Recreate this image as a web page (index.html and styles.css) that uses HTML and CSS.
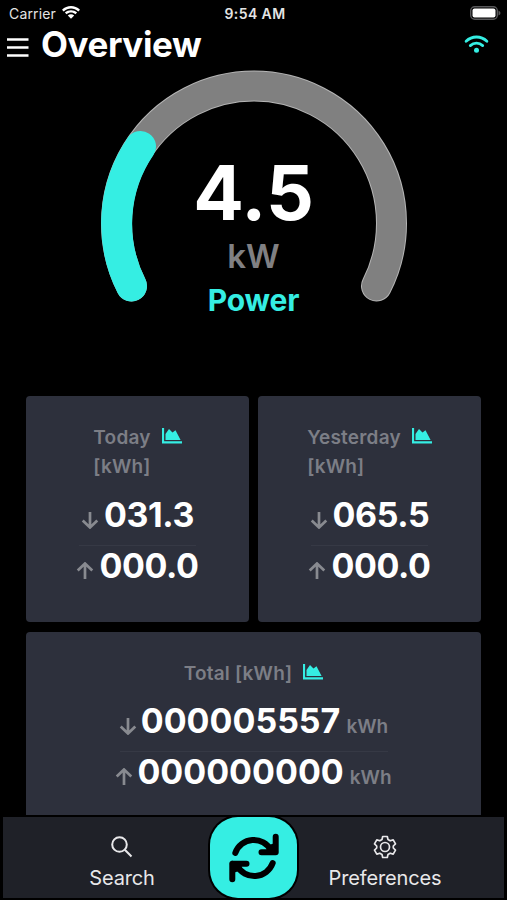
FILE: index.html
```
<!DOCTYPE html>
<html lang="en">
    <head>
        <meta charset="utf-8">
        <title>Overview</title>
        <link rel="stylesheet" href="styles.css">
    </head>
    <body>
        <!-- shared icons -->
        <svg class="sprite">
            <symbol id="wifi" viewBox="0 0 24 18">
                <path d="M1.6 6.2C7.5 0.6 16.500.6 22.4 6.2" />
                <path d="M5.8 10.6C9.400 7.300 14.600 7.300 18.200 10.600" />
                <circle cx="12" cy="15.300" r="2.500" />
            </symbol>
            <symbol id="chart" viewBox="0 0 20 16">
                <path d="M1 0V14.300H20" fill="none" stroke="currentColor" stroke-width="2.200" />
                <path d="M3.500 12V6L7 1L10.500 4.500L13.500 2.300L18.600 12Z" fill="currentColor" />
            </symbol>
            <symbol id="down" viewBox="0 0 18 18">
                <path d="M9 1V16.500M1.700 9.500L9 16.500L16.300 9.500" />
            </symbol>
            <symbol id="up" viewBox="0 0 18 18">
                <path d="M9 17V1.500M1.700 8.500L9 1.500L16.300 8.500" />
            </symbol>
        </svg>

        <div class="status-bar">
            <div class="carrier">
                <span>Carrier</span>
                <svg class="status-wifi" viewBox="0 0 18 13">
                    <path d="M0 3.700C5-1.200 13-1.200 18 3.700L16.300 5.400C12.200 1.500 5.800 1.500 1.700 5.400ZM2.900 6.600C6.300 3.400 11.700 3.400 15.100 6.600L13.400 8.300C10.900 6 7.100 6 4.600 8.300ZM5.800 9.500C7.600 7.900 10.400 7.900 12.200 9.500L9 12.700Z" />
                </svg>
            </div>
            <span class="time">9:54 AM</span>
            <svg class="battery" viewBox="0 0 31 14">
                <rect x="0.700" y="0.700" width="26.600" height="12.600" rx="4" fill="none" stroke="#58585a" stroke-width="1.400" />
                <rect x="2.500" y="2.500" width="23" height="9" rx="2" fill="#fff" />
                <path d="M28.500 4.500Q30.500 5.500 30.500 7T28.500 9.500Z" fill="#58585a" />
            </svg>
        </div>

        <header class="header">
            <svg class="menu" viewBox="0 0 22 19">
                <path d="M0 1.500H21.500M0 9.500H21.500M0 17.500H21.500" />
            </svg>
            <h1>Overview</h1>
            <svg class="wifi"><use href="#wifi" /></svg>
        </header>

        <section class="gauge">
            <svg class="gauge-arc" viewBox="0 0 308 234">
                <path class="edge" d="M31.500 216A137.500 137.500 0 1 1 276.500 216" />
                <path class="track" d="M31.500 216A137.500 137.500 0 1 1 276.500 216" />
                <path class="level" d="M31.500 216A137.500 137.500 0 0 1 40.500 76.500" />
            </svg>
            <div class="gauge-text">
                <div class="gauge-value">4.5</div>
                <div class="gauge-unit">kW</div>
                <div class="gauge-label">Power</div>
            </div>
        </section>

        <main class="cards">
            <div class="card">
                <div class="card-title">
                    <span>Today<br>[kWh]</span>
                    <svg class="chart"><use href="#chart" /></svg>
                </div>
                <div class="row"><svg class="arrow"><use href="#down" /></svg><b>031.3</b></div>
                <div class="line"></div>
                <div class="row"><svg class="arrow"><use href="#up" /></svg><b>000.0</b></div>
            </div>
            <div class="card">
                <div class="card-title">
                    <span>Yesterday<br>[kWh]</span>
                    <svg class="chart"><use href="#chart" /></svg>
                </div>
                <div class="row"><svg class="arrow"><use href="#down" /></svg><b>065.5</b></div>
                <div class="line"></div>
                <div class="row"><svg class="arrow"><use href="#up" /></svg><b>000.0</b></div>
            </div>
            <div class="card total">
                <div class="card-title">
                    <span>Total [kWh]</span>
                    <svg class="chart"><use href="#chart" /></svg>
                </div>
                <div class="row"><svg class="arrow"><use href="#down" /></svg><b>000005557</b><span class="unit">kWh</span></div>
                <div class="line"></div>
                <div class="row"><svg class="arrow"><use href="#up" /></svg><b>000000000</b><span class="unit">kWh</span></div>
            </div>
        </main>

        <nav class="tabs">
            <div class="tab">
                <svg class="tab-icon" viewBox="0 0 24 24">
                    <circle cx="9.500" cy="9.500" r="7.300" />
                    <path d="M14.800 14.800L21.500 21.500" />
                </svg>
                <span>Search</span>
            </div>
            <div class="refresh">
                <svg viewBox="0 0 50 50">
                    <path d="M6.300 20A19.500 19.500 0 0 1 42 17.500L46.700 19.200M46.700 3.700V19.200H32.500" />
                    <path d="M43.700 30A19.500 19.500 0 0 1 8 32.500L3.300 30.800M3.300 46.300V30.800H17.500" />
                    <path class="tip" d="M38 18L40 12L46 10V19ZM12 32L10 38L4 40V31Z" />
                </svg>
            </div>
            <div class="tab">
                <svg class="tab-icon gear" viewBox="0 0 24 24">
                    <path d="M9.700 1.500H14.300L15 4.500L17.200 5.800L20.200 4.900L22.500 8.900L20.300 11V13L22.500 15.100L20.200 19.100L17.200 18.200L15 19.500L14.300 22.500H9.700L9 19.500L6.800 18.200L3.800 19.100L1.500 15.100L3.700 13V11L1.500 8.900L3.800 4.900L6.800 5.800L9 4.500Z" />
                    <circle cx="12" cy="12" r="4.500" />
                </svg>
                <span>Preferences</span>
            </div>
        </nav>
    </body>
</html>
```
FILE: styles.css
```
* {
    margin: 0;
    padding: 0;
    box-sizing: border-box;
}

body {
    height: 900px;
    display: flex;
    flex-direction: column;
    overflow: hidden;
    background: #000;
    color: #fff;
    font-family: Inter, "Liberation Sans", sans-serif;
    white-space: nowrap;
}

svg {
    display: block;
    flex-shrink: 0;
}

.sprite {
    display: none;
}

/* top */
.status-bar {
    height: 27px;
    padding: 0 6px 0 9px;
    display: grid;
    grid-template-columns: 1fr auto 1fr;
    align-items: center;
    font-size: 14px;
    color: #e4e4e4;
}
.carrier {
    display: flex;
    align-items: center;
    gap: 6px;
    letter-spacing: 0.15px;
}
.status-wifi {
    width: 18px;
    height: 13px;
    margin-top: -2px;
    fill: #fff;
}
.time {
    font-weight: 600;
    letter-spacing: 0.4px;
}
.battery {
    width: 31px;
    height: 14px;
    margin-top: -1px;
    justify-self: end;
}
.header {
    height: 40px;
    padding: 0 18px 6px 7px;
    display: flex;
    align-items: center;
}
.menu {
    width: 22px;
    height: 19px;
    margin: 6px 12px 0 0;
    stroke: #fff;
    stroke-width: 2.4;
}
h1 {
    font-size: 35px;
    font-weight: 700;
    line-height: 34px;
    letter-spacing: -0.4px;
}
.wifi {
    width: 25px;
    height: 18px;
    margin-left: auto;
    fill: none;
    stroke: #35eee3;
    stroke-width: 2.8;
    stroke-linecap: round;
}
#wifi circle {
    fill: #35eee3;
    stroke: none;
}

/* gauge */
.gauge {
    height: 329px;
    padding-top: 3px;
    display: grid;
    justify-items: center;
    align-items: start;
}
.gauge-arc,
.gauge-text {
    grid-area: 1 / 1;
}
.gauge-arc {
    width: 308px;
    height: 234px;
}
.gauge-arc path {
    fill: none;
    stroke-linecap: round;
}
.edge {
    stroke: #b5b5b5;
    stroke-width: 31;
}
.track {
    stroke: #808080;
    stroke-width: 29;
}
.level {
    stroke: #35eee3;
    stroke-width: 31;
}
.gauge-text {
    padding-top: 78px;
    text-align: center;
    font-weight: 600;
}
.gauge-value {
    font-size: 75px;
    font-weight: 700;
    line-height: 90px;
}
.gauge-unit {
    font-size: 33px;
    line-height: 36px;
    color: #808083;
}
.gauge-label {
    font-size: 30px;
    font-weight: 700;
    line-height: 53px;
    letter-spacing: -0.2px;
    color: #35eee3;
}

/* cards */
.cards {
    flex: 1;
    min-height: 0;
    padding: 0 26px;
    display: grid;
    grid-template-columns: 1fr 1fr;
    grid-template-rows: 226px 183px;
    gap: 10px 9px;
}
.card {
    padding-top: 27px;
    display: flex;
    flex-direction: column;
    align-items: center;
    border-radius: 4px;
    background: #2d303c;
}
.card-title {
    display: flex;
    gap: 11px;
    margin-bottom: 14px;
    font-size: 19px;
    font-weight: 600;
    line-height: 29px;
    letter-spacing: 0.2px;
    color: #7c7e86;
}
.chart {
    width: 20px;
    height: 16px;
    margin-top: 5px;
    color: #35eee3;
}
.row {
    height: 40px;
    display: flex;
    align-items: baseline;
    line-height: 40px;
}
.row b {
    font-size: 34px;
    font-weight: 700;
    letter-spacing: -0.4px;
}
.arrow {
    width: 18px;
    height: 18px;
    margin-right: 5px;
    transform: translateY(2px);
    fill: none;
    stroke: #888a90;
    stroke-width: 2.7;
}
.line {
    width: 117px;
    height: 1px;
    margin: 10px 0 0;
    background: #363945;
}
.unit {
    margin-left: 6px;
    font-size: 19px;
    font-weight: 600;
    color: #7c7e86;
}
.total {
    grid-column: span 2;
    border-radius: 4px 4px 0 0;
}
.total .card-title {
    margin-bottom: 13px;
}
.total .row b {
    letter-spacing: 0;
}
.total .arrow {
    margin-right: 4px;
}
.total .line {
    width: 268px;
}

/* bottom tabs */
.tabs {
    height: 81px;
    margin: 2px 3px 2px;
    display: grid;
    grid-template-columns: 1fr 87px 1fr;
    flex-shrink: 0;
    background: #1f2128;
}
.tab {
    padding-top: 18px;
    display: flex;
    flex-direction: column;
    align-items: center;
    font-size: 20px;
    line-height: 28px;
    letter-spacing: -0.15px;
    color: #e8e8ea;
}
.tab:first-child {
    padding-left: 31px;
}
.tab:last-child {
    padding-right: 31px;
}
.tab-icon {
    width: 24px;
    height: 24px;
    margin-bottom: 5px;
    fill: none;
    stroke: #e8e8ea;
    stroke-width: 2;
    stroke-linejoin: round;
}
.gear {
    stroke-width: 1.7;
}
.refresh {
    display: flex;
    align-items: center;
    justify-content: center;
    border-radius: 28px;
    background: #35eee3;
    box-shadow: 0 0 0 2px #000;
}
.refresh svg {
    width: 50px;
    height: 50px;
    fill: none;
    stroke: #000;
    stroke-width: 6;
    stroke-linecap: round;
    stroke-linejoin: round;
}
.refresh .tip {
    fill: #000;
    stroke: none;
}
```
